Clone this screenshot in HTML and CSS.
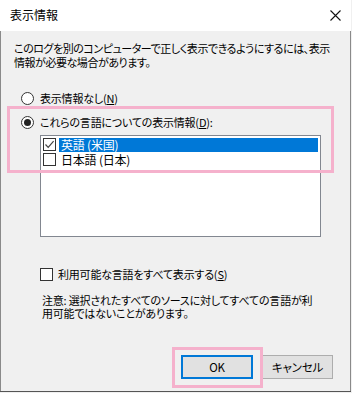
FILE: index.html
```html
<!DOCTYPE html>
<html lang="ja">
<head>
<meta charset="utf-8">
<link rel="stylesheet" href="styles.css">
</head>
<body>
<div class="window">
  <div class="titlebar">
    <span class="title">表示情報</span>
    <svg class="close" width="11" height="11" viewBox="0 0 11 11"><path d="M0.5 0.5 L10.5 10.5 M10.5 0.5 L0.5 10.5" stroke="#111" stroke-width="1.1" fill="none"/></svg>
  </div>
  <div class="content">
    <p class="intro">このログを別のコンピューターで正しく表示できるようにするには、表示<br>情報が必要な場合があります。</p>
    <div class="radio-row r1"><span class="radio"></span><span class="label">表示情報なし(<u>N</u>)</span></div>
    <div class="radio-row r2"><span class="radio checked"></span><span class="label">これらの言語についての表示情報(<u>D</u>):</span></div>
    <div class="listbox">
      <div class="item"><span class="cb checked"><svg width="11" height="11" viewBox="0 0 11 11"><path d="M1.5 5.5 L4.2 8.3 L9.6 2.2" stroke="#444" stroke-width="1.2" fill="none"/></svg></span><span class="itext sel">英語 (米国)</span></div>
      <div class="item"><span class="cb"></span><span class="itext">日本語 (日本)</span></div>
    </div>
    <div class="check-row"><span class="cb big"></span><span class="label">利用可能な言語をすべて表示する(<u>S</u>)</span></div>
    <p class="note">注意: 選択されたすべてのソースに対してすべての言語が利<br>用可能ではないことがあります。</p>
    <div class="buttons">
      <div class="btn default">OK</div>
      <div class="btn">キャンセル</div>
    </div>
  </div>
  <div class="hl hl1"></div>
  <div class="hl hl2"></div>
</div>
</body>
</html>
```
FILE: styles.css
```css
html, body {
  margin: 0;
  padding: 0;
}
body {
  width: 352px;
  height: 393px;
  overflow: hidden;
  background: #f0f0f0;
  font-family: "Noto Sans CJK JP", "Noto Sans", sans-serif;
  font-size: 11px;
  letter-spacing: -0.2px;
  font-feature-settings: "palt";
  color: #000;
}
.window {
  position: relative;
  width: 351px;
  height: 392px;
  box-sizing: border-box;
  border-bottom: 1px solid #555;
}
.titlebar {
  height: 31px;
  background: #fff;
  display: flex;
  align-items: center;
  justify-content: space-between;
  padding: 0 10px 2px 10px;
  box-sizing: border-box;
}
.title {
  font-size: 12px;
  line-height: 14px;
  letter-spacing: 0;
}
.close {
  margin-top: 1px;
}
.content {
  height: 360px;
  box-sizing: border-box;
  border-left: 1px solid #8a8a8a;
  border-right: 1px solid #8a8a8a;
  padding-top: 10px;
}
.intro {
  margin: 0;
  padding-left: 13px;
  line-height: 14px;
  white-space: nowrap;
  letter-spacing: -0.45px;
}
.radio-row {
  display: flex;
  align-items: center;
  height: 14px;
  padding-left: 20px;
}
.r1 { margin-top: 22px; }
.r2 { margin-top: 10px; }
.radio {
  width: 11px;
  height: 11px;
  border: 1px solid #333;
  border-radius: 50%;
  background: #fff;
  display: flex;
  align-items: center;
  justify-content: center;
  margin-right: 6px;
  flex: none;
}
.radio.checked::after {
  content: "";
  width: 7px;
  height: 7px;
  border-radius: 50%;
  background: #222;
}
.label {
  line-height: 14px;
  white-space: nowrap;
}
.listbox {
  margin: 6px 0 0 39px;
  width: 281px;
  height: 102px;
  box-sizing: border-box;
  border: 1px solid #828790;
  background: #fff;
  padding: 1px 1px 0 2px;
}
.item {
  display: flex;
  align-items: center;
  height: 15px;
}
.cb {
  width: 11px;
  height: 11px;
  border: 1px solid #333;
  background: #fff;
  flex: none;
  display: flex;
  align-items: center;
  justify-content: center;
  margin-right: 3px;
}
.itext {
  flex: 1;
  height: 14px;
  line-height: 14px;
  padding-left: 2px;
  margin-right: 1px;
  font-size: 12px;
}
.itext.sel {
  background: #0078d7;
  color: #fff;
}
.check-row {
  display: flex;
  align-items: center;
  height: 14px;
  margin-top: 30px;
  padding-left: 39px;
}
.cb.big {
  margin-right: 5px;
}
.note {
  margin: 13px 0 0 0;
  padding-left: 41px;
  line-height: 13px;
  white-space: nowrap;
}
.buttons {
  display: flex;
  justify-content: flex-end;
  gap: 9px;
  padding-right: 17px;
  margin-top: 35px;
}
.btn {
  width: 71px;
  height: 24px;
  box-sizing: border-box;
  border: 1px solid #adadad;
  background: #e1e1e1;
  display: flex;
  align-items: center;
  justify-content: center;
  line-height: 14px;
  font-size: 11.5px;
}
.btn.default {
  width: 72px;
  border: 2px solid #0078d7;
}
.hl {
  position: absolute;
  border: 3px solid #f5b1cc;
  box-sizing: border-box;
}
.hl1 {
  left: 7px;
  top: 106px;
  width: 327px;
  height: 67px;
}
.hl2 {
  left: 172px;
  top: 347px;
  width: 91px;
  height: 41px;
}
```
